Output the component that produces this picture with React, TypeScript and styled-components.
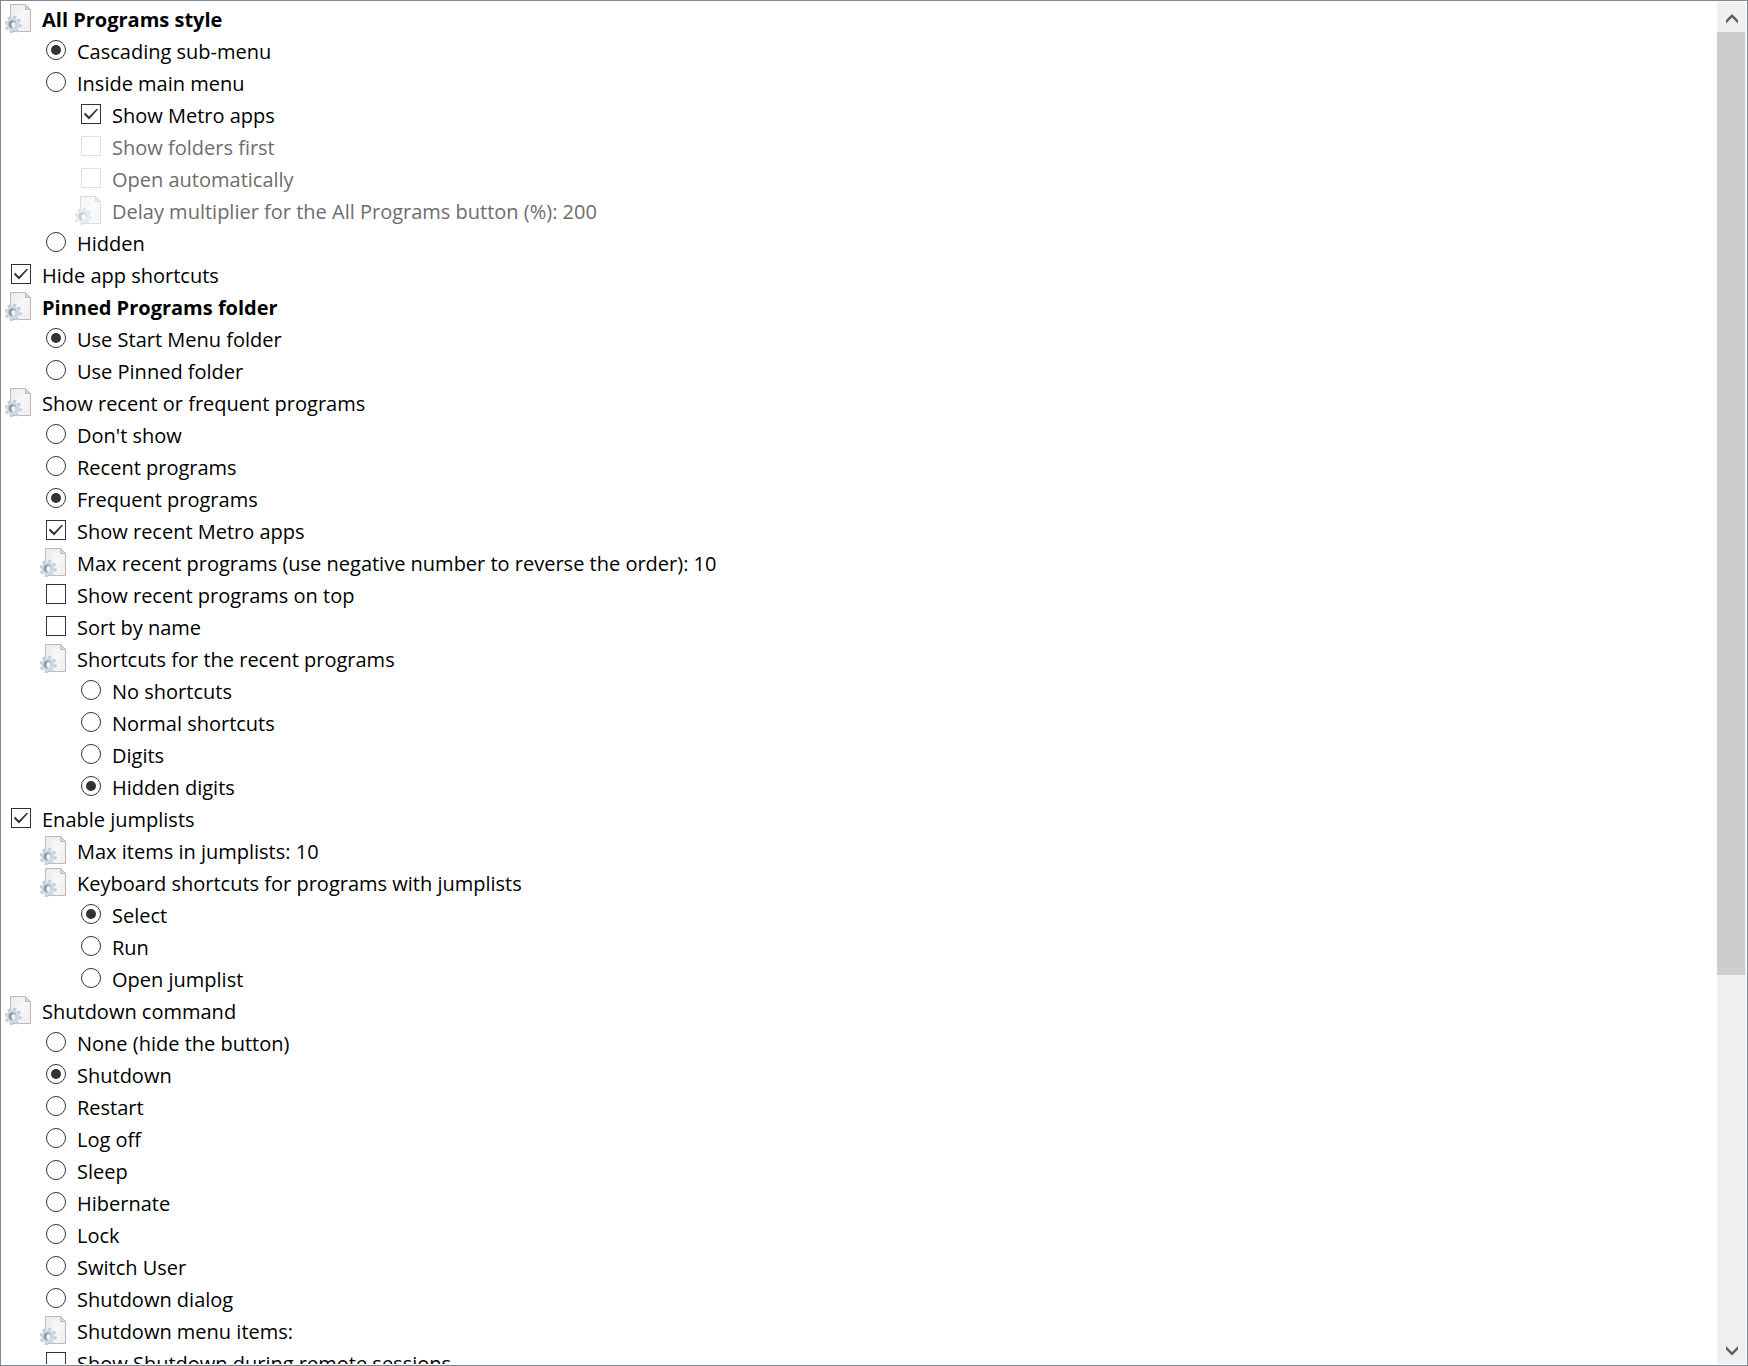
import { useId, useRef } from "react";
import styled, { createGlobalStyle, css } from "styled-components";

const GlobalStyle = createGlobalStyle`
  *, *::before, *::after { box-sizing: border-box; }
  body { margin: 0; background: #fff; }
`;

type Kind = "setting" | "radio" | "check";

interface Item {
  kind: Kind;
  level: number;
  text: string;
  group?: string;
  on?: boolean;
  bold?: boolean;
  disabled?: boolean;
}

const setting = (level: number, text: string, rest: Partial<Item> = {}): Item => ({ kind: "setting", level, text, ...rest });
const radio = (level: number, group: string, text: string, on = false): Item => ({ kind: "radio", level, group, text, on });
const check = (level: number, text: string, on = false, disabled = false): Item => ({ kind: "check", level, text, on, disabled });

const items: Item[] = [
  setting(0, "All Programs style", { bold: true }),
  radio(1, "style", "Cascading sub-menu", true),
  radio(1, "style", "Inside main menu"),
  check(2, "Show Metro apps", true),
  check(2, "Show folders first", false, true),
  check(2, "Open automatically", false, true),
  setting(2, "Delay multiplier for the All Programs button (%): 200", { disabled: true }),
  radio(1, "style", "Hidden"),
  check(0, "Hide app shortcuts", true),
  setting(0, "Pinned Programs folder", { bold: true }),
  radio(1, "pinned", "Use Start Menu folder", true),
  radio(1, "pinned", "Use Pinned folder"),
  setting(0, "Show recent or frequent programs"),
  radio(1, "recent", "Don't show"),
  radio(1, "recent", "Recent programs"),
  radio(1, "recent", "Frequent programs", true),
  check(1, "Show recent Metro apps", true),
  setting(1, "Max recent programs (use negative number to reverse the order): 10"),
  check(1, "Show recent programs on top"),
  check(1, "Sort by name"),
  setting(1, "Shortcuts for the recent programs"),
  radio(2, "shortcuts", "No shortcuts"),
  radio(2, "shortcuts", "Normal shortcuts"),
  radio(2, "shortcuts", "Digits"),
  radio(2, "shortcuts", "Hidden digits", true),
  check(0, "Enable jumplists", true),
  setting(1, "Max items in jumplists: 10"),
  setting(1, "Keyboard shortcuts for programs with jumplists"),
  radio(2, "jumplist", "Select", true),
  radio(2, "jumplist", "Run"),
  radio(2, "jumplist", "Open jumplist"),
  setting(0, "Shutdown command"),
  radio(1, "shutdown", "None (hide the button)"),
  radio(1, "shutdown", "Shutdown", true),
  radio(1, "shutdown", "Restart"),
  radio(1, "shutdown", "Log off"),
  radio(1, "shutdown", "Sleep"),
  radio(1, "shutdown", "Hibernate"),
  radio(1, "shutdown", "Lock"),
  radio(1, "shutdown", "Switch User"),
  radio(1, "shutdown", "Shutdown dialog"),
  setting(1, "Shutdown menu items:"),
  check(1, "Show Shutdown during remote sessions"),
];

const Panel = styled.main`
  display: flex;
  height: 100vh;
  padding: 1px;
  border: 1px solid #828790;
  background: #fff;
  font-family: "Segoe UI", "Open Sans", "Noto Sans", sans-serif;
  font-size: 20px;
  color: #000;
`;

const Tree = styled.ul`
  flex: 1;
  min-width: 0;
  margin: 0;
  padding: 0;
  list-style: none;
  overflow-y: auto;
  scrollbar-width: none;
`;

const Row = styled.li<{ $level: number; $bold?: boolean; $disabled?: boolean }>`
  display: flex;
  align-items: center;
  gap: 11px;
  height: 32px;
  padding-left: ${(p) => 3 + p.$level * 35}px;
  font-weight: ${(p) => (p.$bold ? 700 : 400)};
  color: ${(p) => (p.$disabled ? "#6d6d6d" : "#000")};
  white-space: nowrap;
`;

const Slot = styled.span`
  display: flex;
  flex: none;
  justify-content: flex-end;
  width: 26px;
`;

const mark = css`
  appearance: none;
  display: grid;
  place-items: center;
  width: 20px;
  height: 20px;
  margin: 0;
  border: 1px solid #333;
  background: #fff;
`;

const Radio = styled.input.attrs({ type: "radio" })`
  ${mark}
  border-radius: 50%;
  &:checked::before {
    content: "";
    width: 10px;
    height: 10px;
    border-radius: 50%;
    background: #333;
  }
`;

const Checkbox = styled.input.attrs({ type: "checkbox" })`
  ${mark}
  &:checked::before {
    content: "";
    width: 14px;
    height: 11px;
    background: #333;
    clip-path: polygon(0 6px, 1px 4px, 5px 8px, 13px 0, 14px 1px, 5px 11px);
  }
  &:disabled { border-color: #e0e0e0; }
`;

const Text = styled.label`
  line-height: 28px;
  padding-top: 4px;
`;

const PageIcon = styled.svg<{ $disabled?: boolean }>`
  display: block;
  width: 26px;
  height: 32px;
  opacity: ${(p) => (p.$disabled ? 0.5 : 1)};
`;

function SettingIcon({ disabled }: { disabled?: boolean }) {
  const id = useId();
  return (
    <PageIcon $disabled={disabled} viewBox="0 -2 26 32" aria-hidden="true">
      <defs>
        <linearGradient id={id} x1="0" y1="0" x2="1" y2="1">
          <stop offset="0" stopColor="#e9e9e9" />
          <stop offset="0.5" stopColor="#f8f8f8" />
          <stop offset="1" stopColor="#ededed" />
        </linearGradient>
      </defs>
      <path d="M5.5.5h15l5 5v22h-20z" fill={`url(#${id})`} stroke="#b9b9b9" />
      <path d="M20.5.5v5h5z" fill="#dcdcdc" stroke="#b0b0b0" strokeWidth="0.8" />
      <g transform="translate(8 20.4)">
        <g stroke="#c3ced6" strokeWidth="3.2">
          {[0, 45, 90, 135].map((a) => (
            <line key={a} x1="0" y1="-8.8" x2="0" y2="8.8" transform={`rotate(${a + 12})`} />
          ))}
        </g>
        <circle r="6.6" fill="#ced9e1" />
        <circle cx="-0.6" r="3.8" fill="#8f9ba4" />
        <ellipse cx="0.7" cy="0.6" rx="2.1" ry="2.9" fill="#eef2f4" />
      </g>
    </PageIcon>
  );
}

const ScrollBar = styled.div`
  display: flex;
  flex: none;
  flex-direction: column;
  width: 29px;
  background: #f0f0f0;
`;

const ScrollButton = styled.button`
  display: grid;
  flex: none;
  place-items: center;
  height: 30px;
  padding: 3px 0 0;
  border: 0;
  background: transparent;
`;

const Track = styled.div`
  flex: 1;
  padding-right: 1px;
`;

const Thumb = styled.div`
  height: 72.4%;
  background: #cdcdcd;
`;

function Chevron({ down }: { down?: boolean }) {
  return (
    <svg width="12" height="10" viewBox="0 0 12 10" aria-hidden="true">
      <path d={down ? "M0 0v3.5L6 9.5l6-6V0L6 6z" : "M0 9.5V6l6-6 6 6v3.5l-6-6z"} fill="#606060" />
    </svg>
  );
}

function TreeItem({ item }: { item: Item }) {
  const id = useId();
  const { kind, level, text, group, on, bold, disabled } = item;
  return (
    <Row $level={level} $bold={bold} $disabled={disabled}>
      <Slot>
        {kind === "setting" && <SettingIcon disabled={disabled} />}
        {kind === "radio" && <Radio id={id} name={group} defaultChecked={on} />}
        {kind === "check" && <Checkbox id={id} defaultChecked={on} disabled={disabled} />}
      </Slot>
      {kind === "setting" ? <Text as="span">{text}</Text> : <Text htmlFor={id}>{text}</Text>}
    </Row>
  );
}

export default function App() {
  const tree = useRef<HTMLUListElement>(null);
  const scroll = (by: number) => tree.current?.scrollBy({ top: by });
  return (
    <>
      <GlobalStyle />
      <Panel>
        <Tree ref={tree}>
          {items.map((item) => (
            <TreeItem key={item.text} item={item} />
          ))}
        </Tree>
        <ScrollBar>
          <ScrollButton type="button" aria-label="Scroll up" onClick={() => scroll(-32)}>
            <Chevron />
          </ScrollButton>
          <Track>
            <Thumb />
          </Track>
          <ScrollButton type="button" aria-label="Scroll down" onClick={() => scroll(32)}>
            <Chevron down />
          </ScrollButton>
        </ScrollBar>
      </Panel>
    </>
  );
}
